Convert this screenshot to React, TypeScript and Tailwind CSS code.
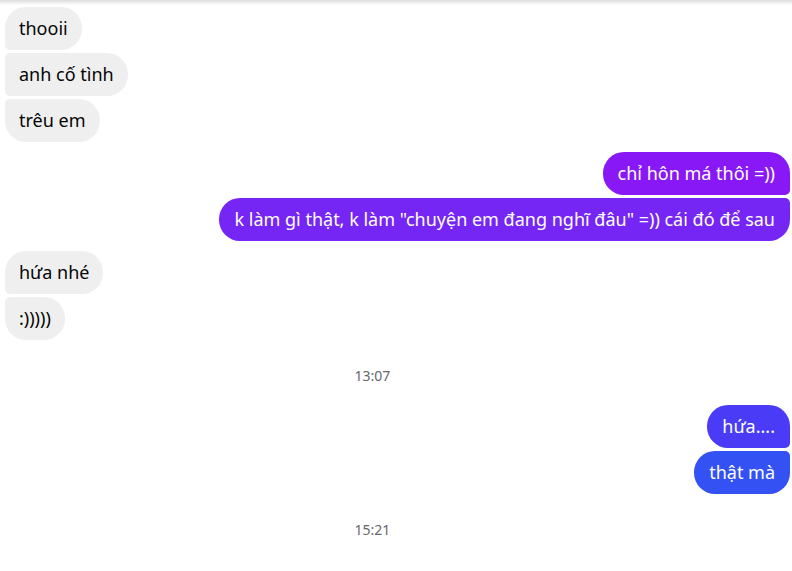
type Msg = { text: string; pos: "first" | "middle" | "last" };

const font = { fontFamily: '"Segoe UI", "Noto Sans", "Open Sans", sans-serif' };

function leftRadius(pos: Msg["pos"]) {
  if (pos === "first") return "rounded-[21px] rounded-bl-[5px]";
  if (pos === "last") return "rounded-[21px] rounded-tl-[5px]";
  return "rounded-[21px] rounded-l-[5px]";
}

function rightRadius(pos: Msg["pos"]) {
  if (pos === "first") return "rounded-[21px] rounded-br-[5px]";
  if (pos === "last") return "rounded-[21px] rounded-tr-[5px]";
  return "rounded-[21px] rounded-r-[5px]";
}

const Incoming = ({ items }: { items: Msg[] }) => (
  <div className="flex flex-col items-start gap-[3px]">
    {items.map((m, i) => (
      <div
        key={i}
        className={`h-[43px] flex items-center px-[14px] bg-[#efefef] text-[#050505] text-[18px] ${leftRadius(m.pos)}`}
      >
        {m.text}
      </div>
    ))}
  </div>
);

const Outgoing = ({ items }: { items: (Msg & { bg: string })[] }) => (
  <div className="flex flex-col items-end gap-[3px]">
    {items.map((m, i) => (
      <div
        key={i}
        className={`h-[43px] flex items-center px-[15px] text-white text-[18px] whitespace-nowrap ${m.bg} ${rightRadius(m.pos)}`}
      >
        {m.text}
      </div>
    ))}
  </div>
);

const Stamp = ({ time }: { time: string }) => (
  <div className="h-[20px] flex items-center justify-center pr-[50px] text-[14px] text-[#65676b]">
    {time}
  </div>
);

export default function App() {
  return (
    <div className="w-[792px] h-[571px] bg-white overflow-hidden relative" style={font}>
      <div className="absolute top-0 left-0 right-0 h-[5px] bg-gradient-to-b from-[#dcdcdc] to-white" />
      <div className="flex flex-col pt-[7px] pl-[5px] pr-[2px]">
        <Incoming
          items={[
            { text: "thooii", pos: "first" },
            { text: "anh cố tình", pos: "middle" },
            { text: "trêu em", pos: "last" },
          ]}
        />
        <div className="mt-[10px]">
          <Outgoing
            items={[
              { text: "chỉ hôn má thôi =))", pos: "first", bg: "bg-[#8819f6]" },
              {
                text: 'k làm gì thật, k làm "chuyện em đang nghĩ đâu" =)) cái đó để sau',
                pos: "last",
                bg: "bg-[#7526f5]",
              },
            ]}
          />
        </div>
        <div className="mt-[10px]">
          <Incoming
            items={[
              { text: "hứa nhé", pos: "first" },
              { text: ":)))))", pos: "last" },
            ]}
          />
        </div>
        <div className="mt-[25px] mb-[20px]">
          <Stamp time="13:07" />
        </div>
        <Outgoing
          items={[
            { text: "hứa....", pos: "first", bg: "bg-[#4a3cf6]" },
            { text: "thật mà", pos: "last", bg: "bg-[#3451f3]" },
          ]}
        />
        <div className="mt-[25px]">
          <Stamp time="15:21" />
        </div>
      </div>
    </div>
  );
}
